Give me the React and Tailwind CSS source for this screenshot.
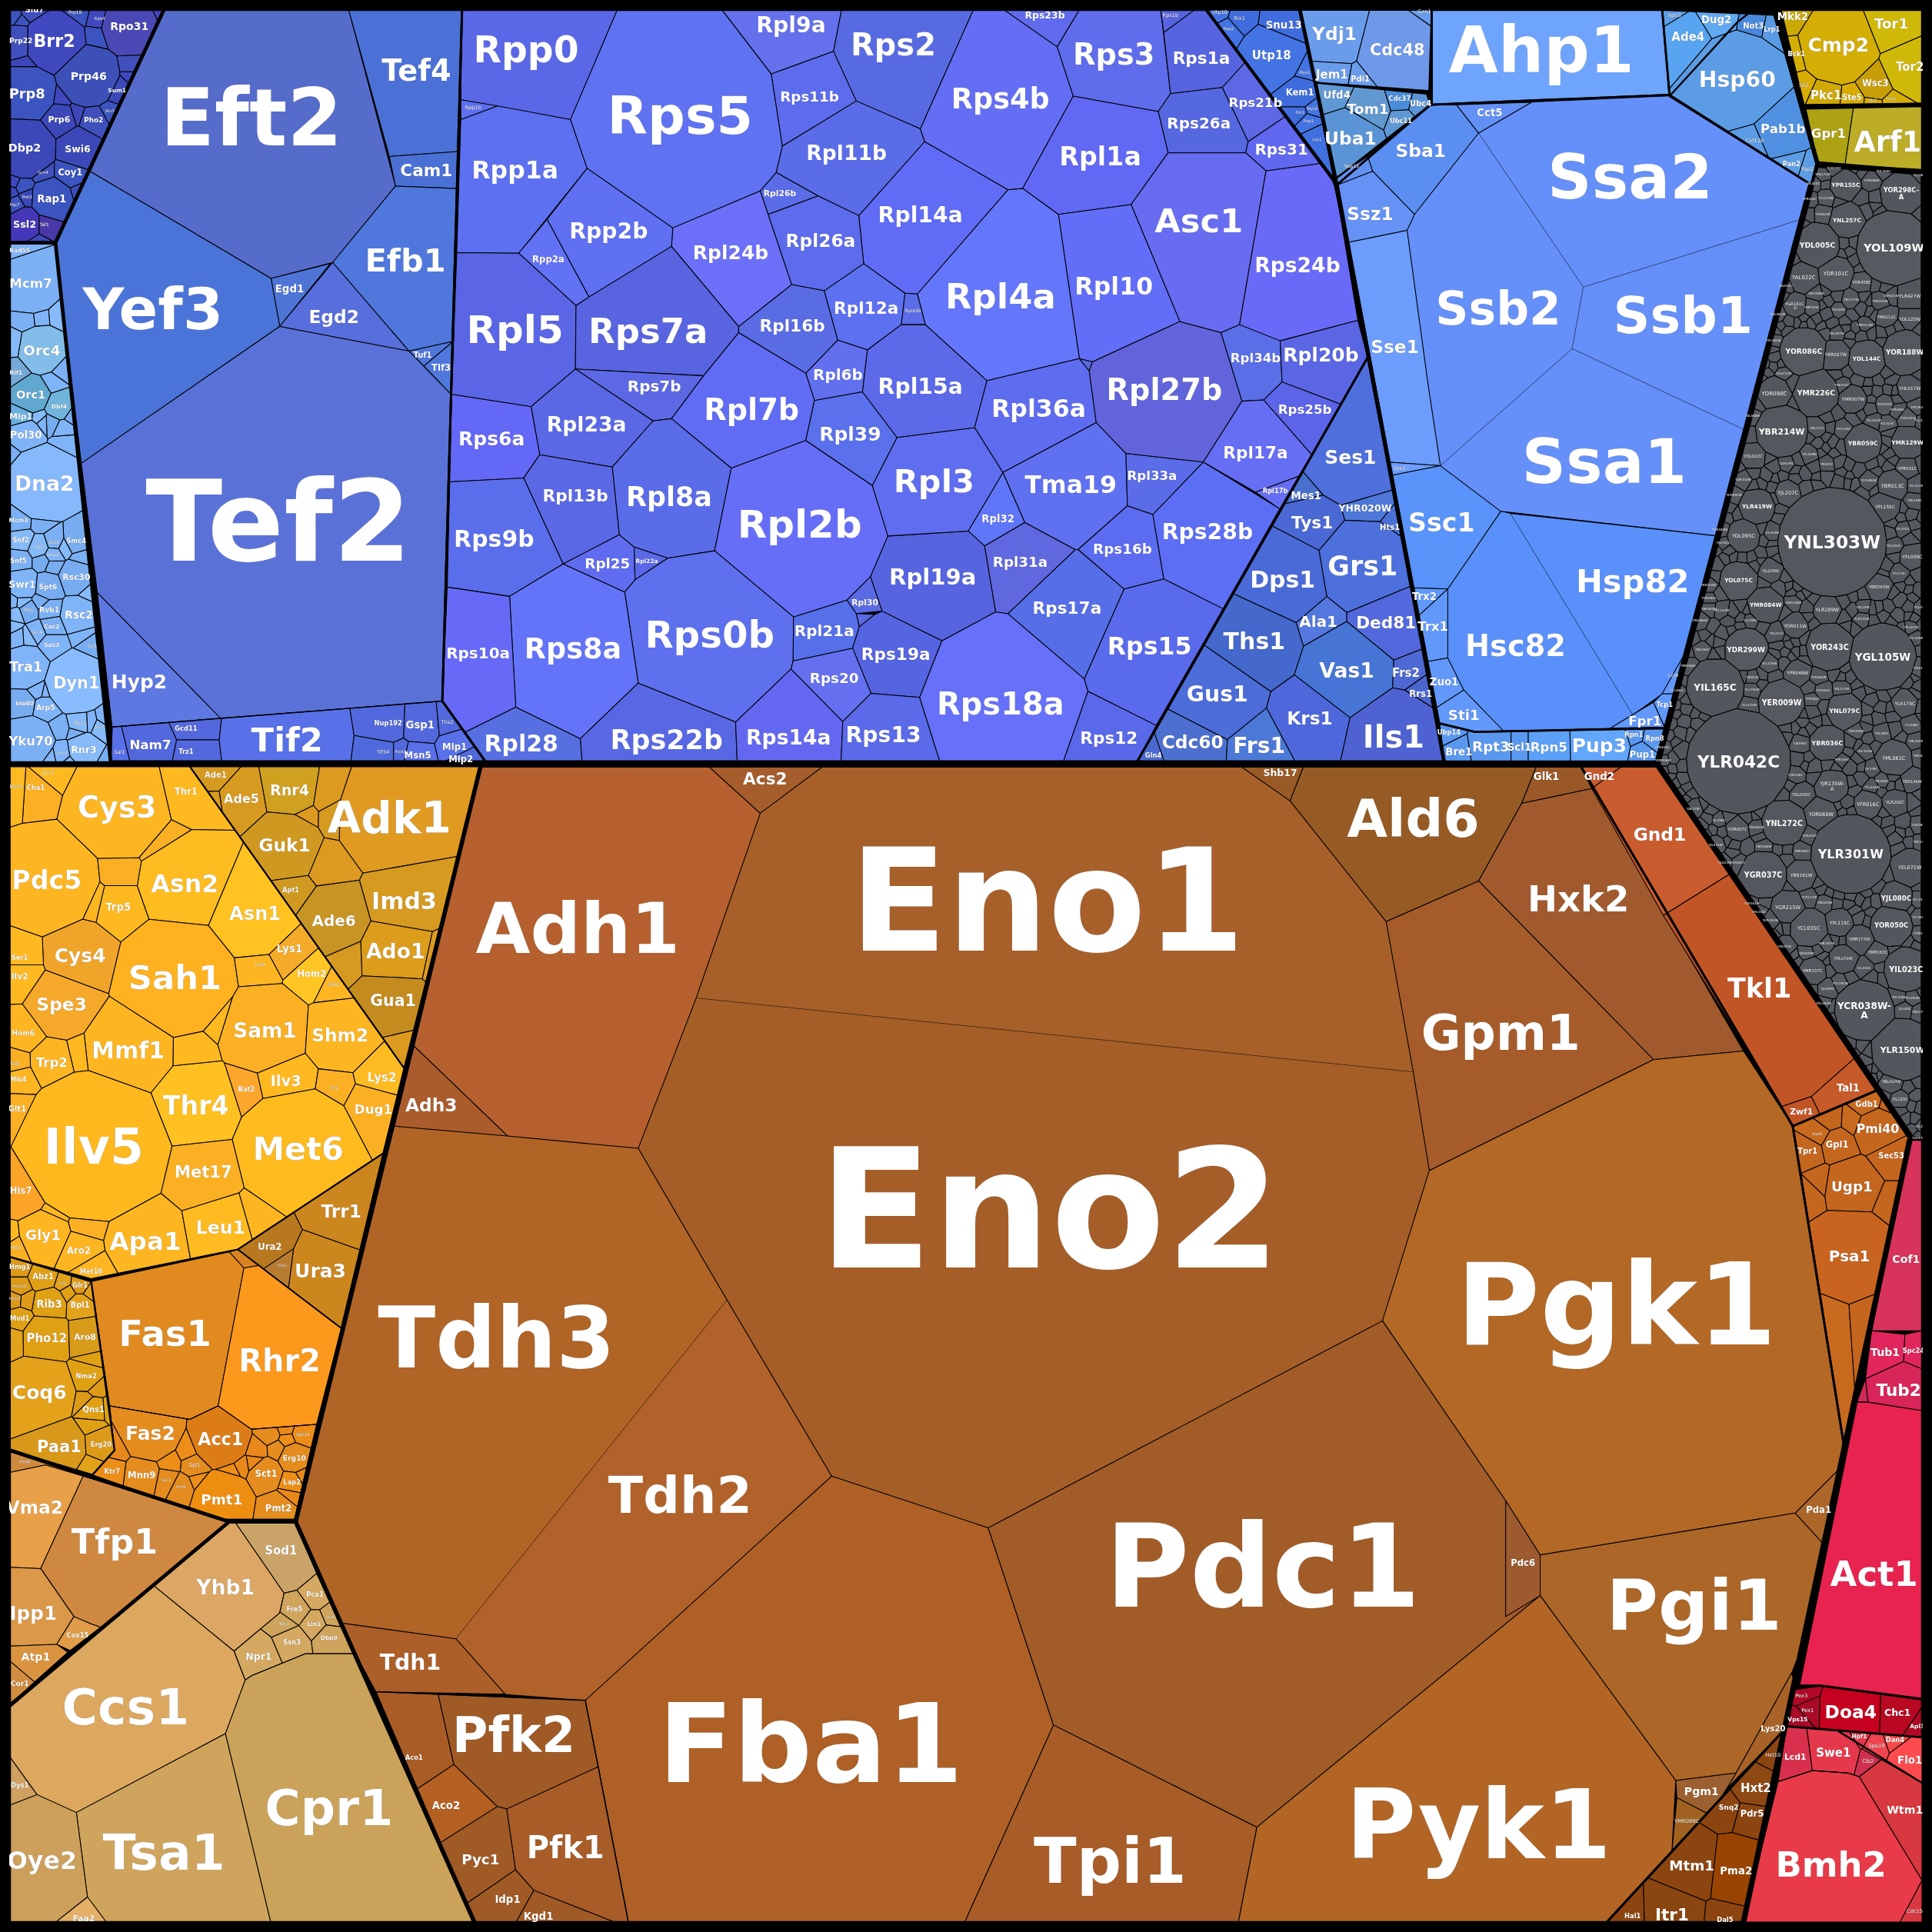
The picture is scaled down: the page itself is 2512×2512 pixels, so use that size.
import React from 'react';

// voronoi treemap: coordinates are in a 1568 box, scaled up by the svg viewBox
const rng = (seed) => () => {
  seed = (seed + 0x6d2b79f5) | 0;
  let t = Math.imul(seed ^ (seed >>> 15), 1 | seed);
  t = (t + Math.imul(t ^ (t >>> 7), 61 | t)) ^ t;
  return ((t ^ (t >>> 14)) >>> 0) / 4294967296;
};

const clip = (poly, a, b, c) => {
  const out = [];
  for (let i = 0; i < poly.length; i++) {
    const p = poly[i];
    const q = poly[(i + 1) % poly.length];
    const dp = a * p[0] + b * p[1] - c;
    const dq = a * q[0] + b * q[1] - c;
    if (dp <= 0) out.push(p);
    if (dp < 0 !== dq < 0) {
      const t = dp / (dp - dq);
      out.push([p[0] + (q[0] - p[0]) * t, p[1] + (q[1] - p[1]) * t]);
    }
  }
  return out;
};

const inside = (poly, x, y) => {
  let hit = false;
  for (let i = 0, j = poly.length - 1; i < poly.length; j = i++) {
    const [xi, yi] = poly[i];
    const [xj, yj] = poly[j];
    if (yi > y !== yj > y && x < ((xj - xi) * (y - yi)) / (yj - yi) + xi) hit = !hit;
  }
  return hit;
};

const powerCells = (poly, sites) =>
  sites.map((s) => {
    let cell = poly;
    for (const o of sites) {
      if (o === s || cell.length === 0) continue;
      const a = 2 * (o[1] - s[1]);
      const b = 2 * (o[2] - s[2]);
      const c = o[1] * o[1] + o[2] * o[2] - s[1] * s[1] - s[2] * s[2] - o[3] * o[3] + s[3] * s[3];
      if (a === 0 && b === 0) continue;
      cell = clip(cell, a, b, c);
    }
    return cell;
  });

const addFiller = (poly, sites, count, seed, rMin, rMax, prefix) => {
  const rand = rng(seed);
  const xs = poly.map((p) => p[0]);
  const ys = poly.map((p) => p[1]);
  const x0 = Math.min(...xs);
  const x1 = Math.max(...xs);
  const y0 = Math.min(...ys);
  const y1 = Math.max(...ys);
  const out = [...sites];
  let tries = 0;
  let added = 0;
  while (added < count && tries < count * 60) {
    tries++;
    const x = x0 + rand() * (x1 - x0);
    const y = y0 + rand() * (y1 - y0);
    const r = rMin + rand() * (rMax - rMin);
    if (!inside(poly, x, y)) continue;
    if (out.some((s) => Math.hypot(s[1] - x, s[2] - y) < s[3] * 0.98 + r * 0.7)) continue;
    const num = String(Math.floor(rand() * 480) + 10).padStart(3, '0');
    const chrom = 'ABCDEFGHIJKLMNOP'[Math.floor(rand() * 16)];
    const label = prefix === 'Y' ? `Y${chrom}${rand() > 0.5 ? 'L' : 'R'}${num}${rand() > 0.5 ? 'W' : 'C'}` : '';
    out.push([label, x, y, r, r > 5 ? 2.5 : 0, null]);
    added++;
  }
  return out;
};

const GROUPS = [
  {
    poly: [[1475,135],[1560,140],[1560,925],[1550,922],[1345,620],[1470,150]],
    w: 4, colors: ['#54585e','#565a60','#53575d'], filler: [620, 11, 2.5, 7.5, 'Y'],
    sites: [
      ['YPR155C',1498,150,12,4.4],['YOR298C-|A',1543,157,17,5],['YNL257C',1499,179,14,4.4],['YOL109W',1537,201,30,8.8],['YDL005C',1475,199,18,5.6],
      ['YDR101C',1490,222,14,4.2],['YAL022C',1464,225,12,4.2],['YOR458C',1511,229,8,3.2],['YLR427W',1550,240,10,3.6],['YMR212C',1531,257,8,3.1],
      ['YOL125W',1550,259,8,3.5],['YGR161C-|D',1457,248,9,3.1],['YOR086C',1464,285,19,5.6],['YKR027W',1490,288,12,3.5],['YDL144C',1515,291,15,4.4],
      ['YOR188W',1546,286,18,5.4],['YMR226C',1474,319,18,5.6],['YDR098C',1440,319,13,4.2],['YMR007W',1504,324,11,3.5],['YHL017W',1550,315,10,3.5],
      ['YBR214W',1446,350,21,6.6],['YBR059C',1512,360,15,4.6],['YMR129W',1548,359,13,4.4],['YOL022C',1423,370,10,3.3],['YBR013C',1536,394,12,3.9],
      ['YPR091C',1548,380,8,3.3],['YJL207C',1451,400,10,4],['YLR419W',1426,411,14,4.4],['YNL303W',1487,440,44,14],['YOL095C',1415,435,13,4],
      ['YPL155C',1530,411,12,3.5],['YJL209W',1437,463,9,3],['YOL075C',1411,471,15,4.4],['YMR084W',1433,491,14,4.4],['YLR289W',1483,495,11,3.9],
      ['YBR293W',1525,476,10,3.3],['YPL009C',1552,452,10,3.6],['YOR011W',1457,508,10,3.6],['YOR243C',1485,525,19,5.8],['YGL105W',1528,533,27,8.1],
      ['YDR299W',1417,527,17,5.4],['YIL165C',1392,558,23,7.3],['YER009W',1446,570,18,5.8],['YPR048W',1459,546,10,3.5],['YNL079C',1497,577,14,4.8],
      ['YLR179C',1546,571,10,3.6],['YBR036C',1483,603,14,4.8],['YLR042C',1411,618,42,13],['YML061C',1537,615,14,3.9],['YJR135W-|A',1487,638,13,4],
      ['YKL050C',1462,645,9,3.3],['YER136W',1552,634,8,3.1],['YFR016C',1516,653,11,3.9],['YLR282C',1538,651,10,3.3],['YNL272C',1448,668,18,5.8],
      ['YOR069W',1478,661,13,3.9],['YLR301W',1502,693,32,9.6],['YOR007C',1410,673,9,3.3],['YEL071W',1550,704,15,3.9],['YGR037C',1431,710,19,5.8],
      ['YBR161W',1462,710,12,3.5],['YJL080C',1539,729,13,5.2],['YGR215W',1451,736,13,4],['YCL035C',1468,753,15,4],['YPL115C',1493,749,11,3.6],
      ['YOR050C',1535,751,17,5.2],['YMR173W',1509,762,11,3.3],['YMR163C',1524,773,8,3.3],['YIL023C',1547,787,18,5.8],['YPL070W',1496,778,11,3.1],
      ['YMR157C',1471,788,11,3.3],['YCR038W-|A',1513,820,24,7.3],['YLR150W',1544,852,25,6.5],['YBL024W',1535,878,9,3.1],['YIL123C',1542,892,7,3],
    ],
  },
  {
    poly: [[375,8],[979,8],[1083,146],[1110,290],[923,618],[394,618],[359,569]],
    w: 3, colors: ['#5f6ff0'],
    cells: [
      ['Rpp0',427,40,28.4,'#5a68e8',[375,8,501,8,463,97,374,81]],
      ['Rpp1b',384,87,4,'#5c70f0',[374,81,404,86,374,97]],
      ['Rpp1a',418,138,19,'#5c70f0',[374,97,404,86,463,97,476.5,136.6,421,205.5,370.7,205]],
      ['Rps5',552,93,41,'#5f72f2',[501,8,586,8,626,60,635,118.6,630,140,617,155,546,185,476.5,136.6,463,97]],
      ['Rpl9a',642,20,17,'#6470ec',[586,8,683,8,676.5,41.6,626,60]],
      ['Rps11b',657,78,11,'#5c6cec',[626,60,676.5,41.6,695,82,635,118.6]],
      ['Rps2',725,36,24,'#586ae2',[683,8,790,8,747,104.6,695,82,676.5,41.6]],
      ['Rpl11b',687,124,16,'#5a6ce8',[695,82,747,104.6,750.5,115,697,175,664,159,630,140,635,118.6]],
      ['Rps4b',812,80,22,'#646ef4',[790,8,815,8,858,38,871,78,830,153,818,154,750.5,115,747,104.6]],
      ['Rps23b',848,12,7.5,'#5f6aec',[815,8,876,8,858,38]],
      ['Rps3',904,44,23,'#5f6cec',[876,8,942,8,950,76,940,90.5,871,78,858,38]],
      ['Rps1b',950,12,4,'#5664e0',[942,8,969.5,8,944.5,26.4]],
      ['Rps1a',975,47,13,'#5664e0',[944.5,26.4,969.5,8,978,8,1012,49,992,71,950,76]],
      ['Rps21b',1019,83,10,'#5c68e4',[1012,49,1047,92,1013,115,992,71]],
      ['Rps26a',973,100,12,'#5668e0',[992,71,1013,115,1011,124,948,124,940,90.5,950,76]],
      ['Rps31',1040,121,12,'#6068f0',[1013,115,1047,92,1073,132.5,1027.5,138.7,1011,124]],
      ['Rpl1a',893,127,20,'#6068f4',[871,78,940,90.5,948,124,918,166,859,174,830,153]],
      ['Asc1',973,179,26,'#686cf0',[948,124,1011,124,1027.5,138.7,1006,263.5,991,270,957.6,261,918,166]],
      ['Rps24b',1053,215,16,'#6a6af8',[1027.5,138.7,1073,132.5,1083,146,1102,260,1039,276.6,1006,263.5]],
      ['Rpl10',904,232,19,'#626ef8',[859,174,918,166,957.6,261,886.6,293.7,876,291]],
      ['Rpl4a',812,240,27,'#6476fa',[818,154,830,153,859,174,876,291,801,309,751,263.5,744.5,238.6]],
      ['Rpl14a',747,174,17,'#606cf6',[750.5,115,818,154,744.5,238.6,734.5,238,701,214,697,175]],
      ['Rpl26b',633,157,6.5,'#5a6ce8',[617,155,630,140,664,159,623.4,174]],
      ['Rpl26a',666,195,14,'#5c6cec',[623.4,174,664,159,697,175,701,214,669,236,642.5,231]],
      ['Rpl24b',593,205,15,'#6c70f8',[546,185,617,155,623.4,174,642.5,231,599.5,265,545,200]],
      ['Rpp2b',494,187,17,'#5f70f2',[476.5,136.6,546,185,545,200,478,241,444,178]],
      ['Rpp2a',445,210,7,'#6272f4',[421,205.5,444,178,478,241,467.5,248]],
      ['Rpl5',418,267,30,'#5a66e6',[370.7,205,421,205.5,467.5,248,467,299.5,431,330,366.6,320]],
      ['Rps7a',526,268,27,'#5864e0',[467.5,248,478,241,545,200,599.5,265,599.5,270,571,305,467,299.5]],
      ['Rps7b',531,313,12,'#5c68e4',[467,299.5,571,305,545,339.8,530,341.6]],
      ['Rpl16b',643,264,13,'#5a6ce4',[599.5,265,642.5,231,669,236,680,276,654,303,599.5,270]],
      ['Rpl12a',703,250,13,'#5c70f0',[669,236,701,214,734.5,238,731.5,263.5,704,284,680,276]],
      ['Rpl43b',741,252,3.5,'#5a6ce8',[734.5,238,744.5,238.6,751,263.5,731.5,263.5]],
      ['Rpl6b',680,304,12,'#6270f0',[680,276,704,284,700,318,661,325,654,303]],
      ['Rpl7b',610,332,23,'#606cf4',[599.5,270,654,303,661,325,654,357.5,593.5,380,545,339.8,571,305]],
      ['Rpl23a',476,344,16,'#5a68e6',[431,330,467,299.5,530,341.6,497,379,438,369]],
      ['Rps6a',399,356,15,'#6468f6',[366.6,320,431,330,438,369,425,388,365,391]],
      ['Rpl13b',467,402,13,'#5a68e6',[438,369,497,379,502.7,434,457,457.7,425,388]],
      ['Rpl8a',543,403,21,'#5a6ce8',[497,379,530,341.6,545,339.8,593.5,380,580,447,542,453,514.7,444,502.7,434]],
      ['Rps9b',401,437,18,'#5a6eec',[365,391,425,388,457,457.7,413.6,484,363,476.5]],
      ['Rpl25',493,457,11,'#5f6cf0',[457,457.7,502.7,434,514.7,444,515.4,470.6,507,480.6]],
      ['Rpl22a',525,455,4.5,'#5a68e8',[514.7,444,542,453,515.4,470.6]],
      ['Rpl2b',649,425,30,'#666ef8',[593.5,380,654,357.5,708,394,720.6,435,706.5,468,687.4,487,644,500.7,580,447]],
      ['Rps0b',576,515,29,'#5e70ee',[507,480.6,515.4,470.6,542,453,580,447,644,500.7,643.7,536.3,642,543,597,586,518,554.4]],
      ['Rps8a',465,526,22,'#6474f8',[413.6,484,457,457.7,507,480.6,518,554.4,471,599.5,418.6,574]],
      ['Rps10a',388,530,12,'#666af6',[363,476.5,413.6,484,418.6,574,376,595,359,570]],
      ['Rpl28',423,603,18,'#5670e2',[376,595,418.6,574,471,599.5,472.4,618,394,618]],
      ['Rps22b',541,600,21,'#5868e4',[471,599.5,518,554.4,597,586,598.3,618,472.4,618]],
      ['Rps14a',640,598,16,'#6468f0',[597,586,642,543,684,585.6,682.6,618,598.3,618]],
      ['Rps20',677,550,11,'#6470f0',[642,543,643.7,536.3,692,526,707,562.7,684,585.6]],
      ['Rpl21a',669,512,12,'#5670ea',[644,500.7,687.4,487,695,498,697.4,508.7,692,526,643.7,536.3]],
      ['Rpl30',702,489,6.5,'#5a6ae4',[687.4,487,706.5,468,716,496,695,498]],
      ['',0,0,0,'#5a6ae4',[695,498,710,498.7,697.4,508.7]],
      ['Rps19a',727,531,13,'#5564e0',[697.4,508.7,710,498.7,716,496,764.5,520,746.4,566,707,562.7,692,526]],
      ['Rps13',717,596,17,'#5a6ae8',[707,562.7,746.4,566,762.8,618,682.6,618,684,585.6]],
      ['Rps18a',812,571,24,'#6670f8',[746.4,566,764.5,520,808,496.6,818,498,880,551,883,561,863,618,762.8,618]],
      ['Rps12',900,599,13,'#5a68ea',[883,561,938.4,588.7,923,618,863,618]],
      ['Rps15',933,524,19,'#5a6aec',[880,551,912.3,478,944.5,469.8,992.6,494,938.4,588.7,883,561]],
      ['Rps17a',866,493,13,'#566ee8',[818,498,872.7,446,875,446,912.3,478,880,551]],
      ['Rpl31a',828,456,11,'#6068e0',[799,443,831.7,424,872.7,446,818,498,808,496.6]],
      ['Rpl32',810,421,8,'#6076f8',[785.8,431,814,383.4,831.7,424,799,443]],
      ['Rpl19a',757,468,17.5,'#5664e0',[720.6,435,785.8,431,799,443,808,496.6,764.5,520,716,496,706.5,468]],
      ['Rpl3',758,390,25,'#5f6ef0',[728,355,791,347,814,383.4,785.8,431,720.6,435,708,394]],
      ['Rpl39',690,352,15,'#5a70ec',[661,325,700,318,728,355,708,394,654,357.5]],
      ['Rpl15a',747,313,17,'#5c6aea',[700,318,704,284,731.5,263.5,751,263.5,801,309,791,347,728,355]],
      ['Rpl36a',843,331,19,'#5e6cf0',[801,309,876,291,884,301,889.7,343,814,383.4,791,347]],
      ['',0,0,0,'#5a68e0',[876,291,886.6,293.7,884,301]],
      ['Tma19',869,393,19,'#5f70f0',[814,383.4,889.7,343,913.8,368,915,410.5,875,446,872.7,446,831.7,424]],
      ['Rpl33a',935,386,10,'#5a6ce8',[913.8,368,976.6,375,935.7,417.6,915,410.5]],
      ['Rps16b',911,445,11,'#5c6cf0',[875,446,915,410.5,935.7,417.6,944.5,469.8,912.3,478]],
      ['Rps28b',980,431,17,'#5c6ef4',[935.7,417.6,976.6,375,1038.6,413,992.6,494,944.5,469.8]],
      ['Rpl27b',945,316,23,'#6264dc',[886.6,293.7,957.6,261,991,270,1008,325.6,976.6,375,913.8,368,889.7,343,884,301]],
      ['Rpl34b',1019,290,10,'#5a6ee8',[991,270,1006,263.5,1039,276.6,1040.5,310,1025.5,324.6,1008,325.6]],
      ['Rpl20b',1072,288,15,'#5a66e4',[1039,276.6,1102,260,1110,290,1088,328,1040.5,310]],
      ['Rps25b',1059,332,10,'#5c64e8',[1025.5,324.6,1040.5,310,1088,328,1064.5,369]],
      ['Rpl17a',1019,367,13,'#666ef4',[1008,325.6,1025.5,324.6,1064.5,369,1054,386.6,1019,399.5,976.6,375]],
      ['Rpl17b',1035,398,5,'#666ef4',[1019,399.5,1054,386.6,1038.6,413]],
    ],
  },
  {
    poly: [[1110,290],[1172,618],[923,618]],
    w: 3, colors: ['#4c6cd8'],
    sites: [
      ['Ses1',1096,371,38,15,'#4f6fdc'],['Mes1',1060,402,14,8,'#4870cc'],['YHR020W',1108,412,16,7.5,'#4d78d8'],['Hts1',1128,428,8,6,'#4a70d8'],['Tys1',1065,424,24,13,'#4a68d4'],
      ['Grs1',1106,459,38,21,'#4d70dd'],['Dps1',1041,470,38,18,'#4a6ad8'],['Ala1',1070,504,20,12,'#5578de'],['Ded81',1125,505,30,13,'#5268dc'],['Ths1',1018,520,38,18,'#4468cc'],
      ['Vas1',1093,544,38,16,'#4775d5'],['Frs2',1141,546,11,9,'#4e68d4'],['Rrs1',1153,563,10,7,'#4a66cc'],['Gus1',988,563,38,17,'#4c6cd8'],['Krs1',1063,583,32,14,'#4e68dc'],
      ['Cdc60',968,602,28,14,'#4d70d0'],['Frs1',1022,605,26,17,'#4c78d8'],['Ils1',1131,598,38,24,'#4f62d2'],['Gln4',936,613,10,5,'#4a68d0'],
    ],
  },
  {
    poly: [[979,8],[1055,8],[1083,146]],
    w: 2.5, colors: ['#4070e0','#3f6cdc','#4474e4'],
    sites: [
      ['Snu13',1042,20,16,8],['Utp18',1032,45,24,9],['Kem1',1055,75,12,7],['Rix1',1006,15,8,4],['Utp10',990,10,6,4],['Pwp2',997,23,7,3],
      ['Myo1',1059,59,5,3],['Pdr1',1055,91,5,3],['Myo2',1065,88,5,3],['Pwp1',1062,98,5,3],['Lsp1',1069,113,8,3],
    ],
  },
  {
    poly: [[1055,8],[1162,8],[1160,74],[1067,67]],
    w: 2.5, colors: ['#6a9cec','#6e98e8'],
    sites: [['Ydj1',1083,27,26,14],['Cdc48',1134,40,32,12.5],['Jem1',1081,60,14,9],['Pdi1',1104,64,8,6],['Gcn1',1156,9,10,4]],
  },
  {
    poly: [[1067,67],[1158,76],[1161,85],[1083,146]],
    w: 2.5, colors: ['#5f98d4','#5b94d6','#6298d0'],
    sites: [['Ufd4',1085,77,10,8],['Tom1',1110,88,17,11],['Cdc37',1136,80,9,5,'#4a8cd8'],['Ubc4',1153,84,8,6],['Ubc11',1137,98,8,5],['Uba1',1096,112,24,14]],
  },
  {
    poly: [[1085,150],[1161,85],[1355,77],[1470,150],[1351,591],[1197,594],[1168,587]],
    w: 3, colors: ['#6590fa'],
    cells: [
      ['Ssa2',1323,143,48,'#6590fa',[1200,108,1243,83,1355,78,1470,150,1462,178,1285,233],1],
      ['Ssb2',1216,250,36,'#6590fa',[1200,108,1148,174,1142,187,1159,312,1169,378,1276,283,1285,233],1],
      ['Ssb1',1366,255,40,'#6590fa',[1285,233,1462,178,1416,349,1276,283],1],
      ['Ssa1',1302,374,48,'#6590fa',[1169,378,1276,283,1416,349,1394,435,1218,415],1],
      ['Hsp82',1325,471,25,'#5a90fa',[1226,417,1394,435,1367,531,1349,563,1325,580],1],
      ['Hsc82',1230,524,23,'#5a90fa',[1218,415,1175,478,1175,534,1188,560,1220,593,1307,591,1325,580,1226,417],1],
      ['Sba1',1153,122,14,'#5a8ef0',[1162,85,1182,85,1200,108,1148,174,1114,139,1110,127]],
      ['Nop13',1097,135,3.5,'#6490f0',[1110,127,1114,139,1083,151,1081,146]],
      ['Cct5',1209,91,8,'#6290f4',[1182,85,1243,83,1200,108]],
      ['Ssz1',1112,173,14,'#6692f6',[1083,151,1114,139,1148,174,1142,187,1093,197]],
      ['Sse1',1132,281,14,'#6c9cfc',[1093,197,1142,187,1159,312,1169,378,1126,375]],
      ['Sse2',1136,380,4,'#6c9cfc',[1126,375,1169,378,1128,386]],
      ['Ssc1',1170,424,20,'#5a94fa',[1128,386,1169,378,1218,415,1175,478,1145,477]],
      ['Trx2',1156,484,8,'#5f98fa',[1145,477,1175,478,1151,500]],
      ['Trx1',1163,508,10,'#6298fa',[1151,500,1175,478,1175,534,1158,537]],
      ['Zuo1',1172,553,8,'#6298fa',[1158,537,1175,534,1188,560,1165,575]],
      ['Sti1',1188,580,11,'#6298fa',[1165,575,1188,560,1220,593,1197,594,1168,587]],
      ['Fpr1',1335,585,10,'#6298fa',[1307,591,1325,580,1342,570,1351,590]],
      ['Tcp1',1351,572,5,'#6298fa',[1342,570,1349,563,1359,563,1351,590]],
      ['Cct4',1358,548,3.5,'#6298fa',[1349,563,1367,531,1370,520,1359,563]],
    ],
  },
  {
    poly: [[1168,587],[1197,594],[1351,591],[1345,618],[1172,618]],
    w: 2.5, colors: ['#5a98f0'],
    sites: [
      ['Ubp14',1176,594,8,5],['Bre1',1184,610,10,8],['Rpt3',1210,606,18,11],['Scl1',1233,606,10,8],['Rpn5',1257,606,18,10,'#5ca0f8'],
      ['Pup3',1298,605,24,15,'#62a6fc'],['Rpn1',1326,596,6,5],['Rpn8',1343,599,8,5],['Pup1',1333,612,8,7],
    ],
  },
  { poly: [[1162,8],[1349,8],[1355,77],[1162,85]], w: 3, colors: ['#6ea4fc'], cells: [['Ahp1',1251,40,50,'#6ea4fc',[1162,8,1349,8,1355,77,1162,85]]] },
  {
    poly: [[1349,8],[1440,12],[1474,133],[1470,150],[1355,78]],
    w: 2.5, colors: ['#5a9ae4','#5c9ce4'],
    sites: [
      ['Hsp60',1410,64,38,17],['Pab1b',1447,104,22,10,'#5090e0'],['Ade4',1370,30,18,9,'#58a4f0'],['Dug2',1393,16,14,8,'#62a8f0'],['Not3',1423,21,8,6,'#4a88dc'],
      ['Lrp1',1438,24,6,5],['Caf130',1424,114,10,4],['Pan2',1454,133,8,5],['Pap2',1467,137,5,4],['Apn3',1359,12,6,4],
    ],
  },
  {
    poly: [[1445,8],[1560,8],[1560,84],[1464,86]],
    w: 3, colors: ['#d4ad05','#d8ac04','#d0a806'],
    sites: [
      ['Mkk2',1455,13,12,8,'#c9a808'],['Cmp2',1492,36,32,15],['Tor1',1535,19,22,11,'#d0b808'],['Tor2',1550,54,22,9,'#d0b808'],['Wsc3',1522,67,14,7,'#c89e08'],
      ['Pkc1',1482,77,12,9],['Ste5',1503,79,9,6],['Bck1',1458,44,11,5],['Slt2',1464,69,7,4],['Ptc1',1520,81,5,3],['Hog1',1535,80,5,3],
    ],
  },
  { poly: [[1465,88],[1560,86],[1560,138],[1475,133]], w: 3, colors: ['#bcac28'], sites: [['Gpr1',1484,108,18,10,'#aca214'],['Arf1',1532,115,32,22,'#bcac28']] },
  {
    poly: [[8,8],[133,8],[45,197],[8,197]],
    w: 3, colors: ['#3f50bc','#3c54c0','#4048c0','#3c48b8'], filler: [14, 21, 2.5, 4.5, ''],
    sites: [
      ['Slu7',28,8,10,6],['Brr2',44,33,24,13.3],['Prp22',17,33,12,5.5],['Rpo31',105,21,22,8.4,'#4a48b4'],['Prp46',72,62,24,8.5,'#3c50b8'],
      ['Prp8',22,76,22,10.7],['Prp6',48,97,12,6.6],['Pho2',76,97,9,5.3],['Dbp2',20,120,24,8.6],['Swi6',63,121,16,7.5],
      ['Coy1',57,140,11,6.9],['Rap1',42,161,16,8],['Ssl2',20,182,13,7.7,'#4438b8'],['Taf1',36,182,7,3.5,'#4838a8'],['Sum1',95,73,9,4.5],
      ['Prp19',61,10,7,3.6],['Rpb4',81,15,5,3.2],['Skn7',89,90,5,3],['Fap7',12,166,6,3.2],['Pob3',22,160,5,3.2],['Gcn4',35,140,6,3.2],
    ],
  },
  {
    poly: [[8,197],[45,197],[90,620],[8,620]],
    w: 3, colors: ['#80b4f8','#7cb0f4','#86baf8','#78acf0'], filler: [36, 31, 2, 4, ''],
    sites: [
      ['Rad55',16,203,6,4.5],['Mcm7',25,230,24,10],['Orc4',34,284,18,11,'#82bce8'],['Rif1',13,302,8,4.5,'#74a8d8'],['Orc1',25,320,14,8.7,'#60a8d0'],
      ['Dbf4',48,330,9,4.5,'#70b4dc'],['Mip1',17,338,8,6.5,'#68b0e0'],['Pol30',21,353,12,8],['Dna2',36,392,30,16,'#86b8fc'],['Mcm3',15,422,8,4.5],
      ['Snf2',17,438,7,5],['Sth1',32,444,6,3.5],['Snf5',15,455,7,5],['Smc4',62,439,8,5],['Dst1',44,440,5,3.5],
      ['Smc2',43,450,5,3.5],['Rsc30',62,468,12,6.5],['Swr1',18,474,11,7.5],['Spt6',39,476,9,5.5],['Rvb1',40,495,6,5.5],
      ['Rsc2',64,499,13,8.4],['Htz1',23,495,5,3.5],['Cac2',42,508,6,4.5],['Sas3',42,523,7,4.5],['Scc4',30,513,5,3.5],
      ['Esf1',75,524,6,3.5],['Tra1',21,541,16,10.6],['Dyn1',62,554,24,12.5,'#88bcff'],['Ino80',20,571,7,4.5],['Arp5',37,574,8,5.5],
      ['Yku70',25,601,18,9.8],['Rnr3',68,608,12,7.5],['Rev3',81,590,4,3],['Mec1',65,587,6,3.5],['Dnl4',50,611,6,3.2],
    ],
  },
  {
    poly: [[133,8],[375,8],[359,569],[394,618],[90,618],[45,197]],
    w: 3, colors: ['#5a72d8'],
    cells: [
      ['Eft2',204,95,62,'#566ccb',[133,8,283,8,321,151,270,213,220,226,73,139]],
      ['Tef4',338,57,23,'#4b71d6',[283,8,375,8,372,123,316,127]],
      ['Cam1',346,138,13,'#4b70d5',[316,127,372,123,371,153,321,151]],
      ['Efb1',329,211,25,'#4f77dc',[321,151,371,153,368,277,332,285,270,213]],
      ['Tuf1',343,288,6,'#4f77dc',[332,285,368,277,344,297]],
      ['Tif3',358,298,7,'#4f77dc',[344,297,368,277,366,320]],
      ['Egd1',235,234,8,'#4e74d6',[220,226,268,214,227,265]],
      ['Egd2',271,257,14,'#586edd',[270,213,332,285,227,265]],
      ['Yef3',124,250,45,'#4b74d8',[73,139,220,226,227,265,66,376,45,197]],
      ['Tef2',226,422,88,'#5a72d8',[66,376,227,265,332,285,366,320,359,569,179,583,79,481]],
      ['Hyp2',113,553,15,'#5e78e2',[79,481,179,583,91,590]],
    ],
  },
  {
    poly: [[91,590],[179,583],[359,569],[394,618],[90,618]],
    w: 1.5, colors: ['#5870e8','#5268dc','#4f6adc'],
    sites: [
      ['Sal1',97,610,8,4],['Nam7',122,604,20,10,'#5268dc'],['Gcd11',151,591,9,5],['Trz1',151,610,9,5],['Tif2',233,600,48,26,'#5870e8'],
      ['Nup192',315,587,14,5],['Gsp1',341,588,14,8],['Tif34',311,610,8,4],['Msn5',339,613,10,7],['Mlp1',369,606,10,7],
      ['Mlp2',374,616,8,7],['Ths2',363,586,6,4],['Prp43',325,610,5,3],
    ],
  },
  {
    poly: [[8,622],[154,622],[328,867],[311,936],[193,1014],[74,1038],[8,1020]],
    w: 2, colors: ['#fdb622','#fbb024','#ffb920'], filler: [10, 41, 2, 4, ''],
    sites: [
      ['Dur1',39,627,7,4],['Cha1',29,639,9,5],['Met3',13,638,7,4],['Cys3',95,655,40,23],['Thr1',151,642,15,7],
      ['Pdc5',38,714,40,20],['Trp5',96,736,14,8],['Asn2',150,717,34,19,'#ffbc20'],['Asn1',207,741,34,14.5,'#ffc220'],['Cys4',65,775,24,15,'#f0a52a'],
      ['Ser1',16,777,6,5],['Ilv2',16,792,9,6.5],['Sah1',142,793,46,26,'#ffb120'],['Lys1',235,770,14,8,'#f5ab2a'],['Lys9',211,783,4,3.5],
      ['Hom2',253,790,10,7,'#ffc525'],['Gdh2',271,799,5,3.5],['Spe3',50,815,24,14,'#f5a82a'],['Sam1',215,836,33,15.8],['Shm2',276,840,26,14],
      ['Mmf1',104,852,34,18],['Hom6',19,838,10,5.5],['Trp2',42,862,13,10],['His4',15,876,7,5],['Ilv8',12,863,5,4],
      ['Lys2',310,874,14,9,'#ffbb22'],['Thr4',159,897,32,20,'#ffc021'],['Bat2',200,884,9,5,'#fca62c'],['Ilv3',232,877,20,11.7],['Sct2',271,883,4,3],
      ['Dug1',303,900,18,10],['Glt1',14,900,8,6],['Ilv5',76,930,60,38,'#ffb91e'],['Met6',242,932,48,25,'#ffbb1e'],['Met17',165,951,25,12.7],
      ['His7',17,966,20,7,'#fca428'],['Apa1',118,1007,28,19.6],['Leu1',179,996,22,14.2,'#ffbb20'],['Gly1',35,1002,18,11],['Aro2',64,1015,10,7],
      ['His2',13,1012,6,4],['Met10',74,1032,8,5],
    ],
  },
  {
    poly: [[154,622],[390,622],[328,867]],
    w: 2, colors: ['#dc9a20','#d69a20','#cf9820'], filler: [8, 51, 2, 4, ''],
    sites: [
      ['Ade1',175,629,10,6],['Ade5',196,648,17,9.6],['Rnr4',235,641,20,11.5,'#d0a020'],['Adk1',316,663,40,34,'#e09a22'],['Guk1',231,686,26,14],
      ['Imd3',328,731,26,18],['Ade6',271,747,24,12,'#c89424'],['Ado1',321,772,26,16,'#dc9c1c'],['Gua1',319,812,24,12.3,'#c48c1e'],['Apt1',236,722,6,5],
    ],
  },
  {
    poly: [[311,936],[277,1078],[193,1014]],
    w: 2, colors: ['#cc861e'],
    sites: [['Trr1',277,983,22,14],['Ura2',219,1012,13,7,'#b87820'],['Ura3',260,1031,24,15],['Ura1',229,1027,8,3,'#b87c30']],
  },
  {
    poly: [[74,1040],[186,1016],[193,1014],[277,1078],[257,1156],[204,1160],[177,1141],[154,1152],[89,1141]],
    w: 0.5, colors: ['#e08a20'],
    cells: [
      ['Fas1',134,1082,28,'#e08a20',[74,1040,186,1016,198,1029,177,1141,154,1152,89,1141]],
      ['Rhr2',227,1104,24,'#fc981c',[198,1029,210,1027,277,1078,257,1156,204,1160,177,1141]],
      ['',0,0,0,'#d88420',[186,1016,193,1014,210,1027,198,1029]],
    ],
  },
  {
    poly: [[89,1141],[154,1152],[177,1141],[204,1160],[257,1156],[239,1233],[176,1233],[75,1197],[93,1177]],
    w: 1, colors: ['#e48c1e','#ec8e18','#e8881a'], filler: [14, 61, 2, 4, ''],
    sites: [
      ['Fas2',122,1163,22,15],['Acc1',179,1168,22,13.4,'#dc7c16'],['Erg10',239,1183,11,5.5],
      ['Sct1',216,1196,11,7],['Lap2',237,1203,7,5],['Pmt1',180,1217,22,11,'#ee8e10'],['Pmt2',226,1224,10,7],['Mnn9',115,1197,13,7],
      ['Ktr7',91,1194,9,5],['Sps14',246,1164,7,3.5],['Dpl1',158,1189,7,4],['Sac1',135,1201,7,3],['Pmt4',147,1207,7,3],
    ],
  },
  {
    poly: [[8,1020],[74,1040],[93,1177],[75,1197],[8,1177]],
    w: 2.5, colors: ['#e0a014','#dc9a18','#e2a21a'], filler: [10, 71, 2, 4, ''],
    sites: [
      ['Hmg1',16,1028,7,5],['Abz1',35,1036,10,6],['Glr1',65,1043,6,5],['Rib3',40,1058,12,8],['Bpl1',65,1059,8,6],
      ['Hem12',16,1044,6,3],['Mvd1',16,1070,6,5],['Pho12',38,1086,18,9],['Aro8',69,1085,13,6.5,'#d89c1a'],['Coq6',32,1130,28,15,'#e4a21a'],
      ['Nma2',70,1117,10,5],['Qns1',76,1144,8,6],['Paa1',48,1174,20,12.6,'#d8981a'],['Erg20',82,1172,10,5],['Idi1',51,1041,4,3],['Hem2',12,1054,4,3],
    ],
  },
  {
    poly: [[8,1177],[186,1235],[8,1384]],
    w: 3, colors: ['#d89040'],
    cells: [
      ['Vma8',20,1186,3,'#d08a40',[8,1177,67.5,1198,37,1189,8,1195]],
      ['Vma2',28,1223,14,'#e8a048',[8,1195,37,1189,67.5,1198,33,1273,8,1272]],
      ['Tfp1',93,1251,26.7,'#ce8840',[67.5,1198,186,1235,81.5,1320.7,74,1318,60,1312,33,1273]],
      ['Ipp1',27,1309,14.8,'#da9848',[8,1272,33,1273,60,1312,46,1334.5,8,1336]],
      ['Cox15',63,1327,5,'#e09c48',[60,1312,74,1318,81.5,1320.7,57,1339.5,46,1334.5]],
      ['Atp1',29,1344.6,8.5,'#da9440',[8,1336,46,1334.5,55,1341,28,1365,8,1348]],
      ['Cor1',16,1366,5.5,'#d08c40',[8,1348,28,1365,8,1384]],
    ],
  },
  {
    poly: [[8,1385],[186,1235],[240,1235],[385,1560],[8,1560]],
    w: 3, colors: ['#cfa25c'],
    cells: [
      ['Ccs1',102,1385,38,'#dca75e',[8,1385,125,1287,190,1340,199,1363.5,183,1407,62,1471,30,1456.5,8,1426]],
      ['Tsa1',133,1503,38,'#cfa45c',[62,1471,183,1407,220,1561,87,1561,71,1539.6]],
      ['Cpr1',267,1467,38,'#caa25a',[199,1363.5,204,1360,248,1342,287,1342,387,1561,220,1561,183,1407]],
      ['Oye2',34,1510,19,'#cc9f5a',[8,1465,30,1456.5,62,1471,71,1539.6,44,1561,8,1561]],
      ['Dys1',16,1448.5,5,'#cfa060',[8,1426,30,1456.5,8,1465]],
      ['Faa2',68,1557,6.5,'#e4b068',[44,1561,71,1539.6,87,1561]],
      ['Yhb1',183,1288,16,'#dca664',[125,1287,186,1235,191,1235.6,230.6,1293,227,1309,190,1340]],
      ['Sod1',228,1258,9,'#c9a368',[191,1235.6,240,1235,257,1277,241,1290.5,230.6,1293]],
    ],
  },
  {
    poly: [[230.6,1293],[241,1290.5],[257,1277],[287,1342],[248,1342],[204,1360],[199,1363.5],[190,1340],[227,1309]],
    w: 0.6, colors: ['#cfa45c','#d4a860','#c9a058'],
    sites: [
      ['Pca1',255.6,1294,8,5],['Fre5',239,1306,9,5],['Lin1',255,1318,7,4.5],['Npr1',210,1344,12,7.5],['Ssn3',237,1332.5,10,5],
      ['Dbp9',267,1329,8,4.5],['Yak1',230.6,1317.7,6,3.5],['Nat1',269,1312,4,3],
    ],
  },
  {
    poly: [[390,622],[1283,622],[1455,914],[1497,1176],[1447,1405],[1304,1560],[385,1560],[240,1235]],
    w: 3, colors: ['#a8602a'],
    cells: [
      ['Eno1',850,730,111,'#a8602a',[617,660,668,622,1007,622,1047,650,1125,748,1147,870,565,810],1],
      ['Eno2',852,980,130,'#a55e28',[565,810,1147,870,1160,950,1122,1072,802,1240,675,1198,590,1055,518,932],1],
      ['Tdh3',403,1085,66,'#b06426',[320,914,412,922,518,932,590,1055,370,1330,275,1317,240,1235],1],
      ['Tdh2',552,1213,40,'#b0622a',[590,1055,675,1198,475,1380,410,1375,370,1330],1],
      ['Adh1',469,753,55,'#b5602e',[390,622,575,622,617,660,565,810,518,932,412,922,336,849]],
      ['Adh3',350,897,14,'#ab5c2c',[336,849,412,922,320,914]],
      ['Acs2',621,632,13,'#a55d2c',[575,622,668,622,617,660]],
      ['Shb17',1039,627,7.5,'#9a5a26',[1007,622,1058,622,1047,650]],
      ['Ald6',1147,664,41,'#965a24',[1058,622,1247,622,1235,652,1200,715,1125,748,1047,650]],
      ['Glk1',1255,630,8,'#9a5828',[1247,622,1283,622,1292,640,1235,652]],
      ['Hxk2',1281,729,28,'#a05a2e',[1235,652,1292,640,1415,853,1342,860,1200,715]],
      ['Gpm1',1218,838,38,'#a55c2a',[1125,748,1200,715,1342,860,1160,950,1147,870]],
      ['Pgk1',1312,1058,89,'#b36825',[1160,950,1342,860,1415,853,1455,914,1497,1176,1492,1193,1457,1228,1250,1262,1222,1218,1122,1072]],
      ['Tdh1',333,1349,17,'#ad5f2a',[275,1317,370,1330,410,1375,305,1373]],
      ['Fba1',658,1414,86,'#ae6026',[675,1198,802,1240,855,1400,783,1560,510,1560,475,1380]],
      ['Pdc1',1025,1270,90,'#a25c28',[802,1240,1122,1072,1222,1218,1222,1312,1250,1295,1020,1483,855,1400]],
      ['Pdc6',1236,1268,7,'#9c5a2e',[1222,1218,1250,1262,1250,1295,1222,1312]],
      ['Pgi1',1375,1302,55,'#ab6628',[1250,1262,1457,1228,1479,1252,1462,1338,1454,1358,1409,1439,1360,1445,1250,1295]],
      ['Pda1',1476,1225,7,'#ab6628',[1457,1228,1492,1193,1479,1252]],
      ['Lys20',1439,1403,6,'#a86228',[1454,1358,1458,1370,1447,1405,1400,1453,1409,1439]],
      ['Pyk1',1200,1480,75,'#b26525',[1020,1483,1250,1295,1360,1445,1357,1502,1304,1560,1005,1560]],
      ['Tpi1',901,1510,49,'#a85c28',[855,1400,1020,1483,1005,1560,783,1560]],
      ['Pgm1',1381,1454,8.5,'#9c6030',[1360,1445,1409,1439,1398,1457,1386,1472,1361,1459]],
      ['YMR099C',1369,1478,4,'#a0621e',[1361,1459,1386,1472,1357,1502]],
    ],
  },
  {
    poly: [[305,1373],[475,1380],[510,1560],[385,1560]],
    w: 1.5, colors: ['#a05a26'],
    sites: [['Pfk2',417,1408,45,38],['Pfk1',459,1499,40,24,'#a85c28'],['Aco2',362,1465,14,8,'#b46022'],['Aco1',336,1426,12,5,'#aa5c26'],['Pyc1',390,1509,22,11],['Idp1',412,1541,14,8],['Kgd1',437,1555,12,8]],
  },
  {
    poly: [[1304,1560],[1447,1405],[1415,1560]],
    w: 3, colors: ['#8c4410'],
    sites: [
      ['Hxt2',1425,1451,16,9,'#8e4814'],['Snq2',1403,1467,7,5.5],['Pdr5',1422,1472,11,7],['Mtm1',1373,1514,24,11],['Pma2',1409,1518,24,8,'#984400'],
      ['Itr1',1357,1554,22,13,'#8a4610'],['Dal5',1400,1558,8,5],['Hxt10',1439,1424,7,4],['Hal1',1325,1555,8,5],
    ],
  },
  {
    poly: [[1455,914],[1523,885],[1550,920],[1497,1176]],
    w: 3, colors: ['#c86a1e','#c4661e'], filler: [8, 81, 2, 4, ''],
    sites: [
      ['Gdb1',1515,896,9,6],['Pmi40',1524,916,16,9.5],['Tpr1',1467,934,8,6],['Gpi1',1491,929,9,7],['Ugp1',1503,963,20,11],
      ['Psa1',1501,1019,36,12,'#c8641f'],['Sec53',1535,938,10,6],['Aad3',1475,920,5,3],
    ],
  },
  {
    poly: [[1283,622],[1345,622],[1523,885],[1455,914]],
    w: 3, colors: ['#c25526'],
    cells: [
      ['Gnd2',1298,630,8,'#c45a30',[1283,622,1316,622,1292,640]],
      ['Gnd1',1347,677,14,'#c95c2f',[1292,640,1316,622,1345,622,1406,708,1350,743]],
      ['Tkl1',1428,802,21,'#c25526',[1350,743,1406,708,1505,859,1470,890,1446,898]],
      ['Tal1',1500,883,8,'#c65a28',[1505,859,1523,885,1477,904,1470,890]],
      ['Zwf1',1462,902,6.5,'#c25526',[1446,898,1470,890,1477,904,1455,914]],
    ],
  },
  {
    poly: [[1550,925],[1560,925],[1560,1379],[1477,1368],[1460,1368]],
    w: 3, colors: ['#e8234f'],
    cells: [
      ['Cof1',1547,1022,8.5,'#d8335a',[1548,925,1560,925,1560,1080,1519,1080]],
      ['Tub1',1530,1097,8.5,'#e0265c',[1519,1080,1546,1083,1545,1105,1514,1119]],
      ['Spc24',1553,1096,5,'#e0265c',[1546,1083,1560,1080,1560,1111,1545,1105]],
      ['Tub2',1541,1128,13,'#d8255a',[1514,1119,1545,1105,1560,1111,1560,1145,1516,1138]],
      ['',0,0,0,'#d02a58',[1514,1119,1516,1138,1507,1138]],
      ['Act1',1521,1277,27,'#e8234f',[1507,1138,1516,1138,1560,1145,1560,1379,1477,1368,1460,1368]],
    ],
  },
  {
    poly: [[1455,1371],[1477,1368],[1560,1379],[1560,1410],[1450,1401]],
    w: 3, colors: ['#a80a28','#b00824'],
    sites: [['Doa4',1502,1389,24,14,'#c6001f'],['Chc1',1540,1390,14,7.5,'#b80822'],['Vps15',1459,1395,7,4.5],['Pex1',1467,1388,6,4],['Pex3',1462,1376,5,4],['Apl3',1556,1401,6,4.5]],
  },
  {
    poly: [[1450,1401],[1560,1410],[1560,1447],[1527,1428],[1509,1442],[1500,1439],[1471,1437],[1443,1446]],
    w: 1, colors: ['#f04450','#e6384c'],
    sites: [
      ['Lcd1',1457,1426,14,6.5,'#d8304c'],['Swe1',1488,1422,20,9,'#e6384c'],['Flo1',1550,1428,15,8,'#fc4a4e'],
      ['Dan4',1538,1412,8,5,'#f44a4c'],['Hpf1',1509,1409,6,4.5],['Spa19',1523,1417,8,4],['Clb2',1516,1429,6,4,'#d03050'],
    ],
  },
  {
    poly: [[1443,1446],[1471,1437],[1500,1439],[1509,1442],[1527,1428],[1560,1447],[1560,1560],[1415,1560]],
    w: 1, colors: ['#e83a48'],
    cells: [
      ['Bmh2',1486,1513,27,'#e83a48',[1443,1446,1471,1437,1500,1439,1509,1442,1560,1526,1542,1560,1415,1560]],
      ['Wtm1',1546,1469,8.5,'#d8383f',[1509,1442,1527,1428,1560,1447,1560,1526]],
      ['Cdc15',1554,1551,4,'#d8383f',[1560,1526,1560,1560,1542,1560]],
    ],
  },
];

const THICK = [
  [[8,620],[1345,620],4.5],
  [[133,8],[45,197],[90,620],3],
  [[8,197],[45,197],3],
  [[390,622],[240,1235],[385,1560],3.5],
  [[1345,620],[1550,922],5],
  [[1470,150],[1345,620],5],
  [[1474,133],[1560,140],4.5],
  [[1550,925],[1415,1560],4.5],
  [[1085,150],[1172,618],3],
  [[979,8],[1085,150],2.5],
  [[1055,8],[1085,150],3],
  [[1440,10],[1476,135],3],
  [[1464,86],[1560,85],3],
  [[1419,11],[1410,18],[1355,78],1.5],
  [[8,1177],[186,1235],[240,1235],3],
  [[8,1384],[186,1235],3],
  [[1492,1405],[1560,1447],1.5],
  [[1218,415],[1394,435],0.65],
  [[518,932],[590,1055],[675,1198],0.65],
];

const toPoints = (flat) => {
  const out = [];
  for (let i = 0; i < flat.length; i += 2) out.push([flat[i], flat[i + 1]]);
  return out;
};
const str = (pts) => pts.map((p) => `${p[0].toFixed(2)},${p[1].toFixed(2)}`).join(' ');

function buildGroup(g, gi) {
  const shapes = [];
  const labels = [];
  if (g.cells) {
    g.cells.forEach((c) => {
      shapes.push({ pts: toPoints(c[5]), fill: c[4], thin: !!c[6] });
      if (c[0]) labels.push({ text: c[0], x: c[1], y: c[2], f: c[3] });
    });
  } else {
    const sites = g.filler ? addFiller(g.poly, g.sites, g.filler[0], g.filler[1], g.filler[2], g.filler[3], g.filler[4]) : g.sites;
    const rand = rng(gi * 97 + 5);
    const polys = powerCells(g.poly, sites);
    sites.forEach((s, i) => {
      const fill = s[5] || g.colors[Math.floor(rand() * g.colors.length)];
      if (polys[i].length > 2) shapes.push({ pts: polys[i], fill, thin: false });
      if (s[0] && s[4]) labels.push({ text: s[0], x: s[1], y: s[2], f: s[4] });
    });
  }
  return { shapes, labels };
}

const BUILT = GROUPS.map(buildGroup);

function Label({ text, x, y, f }) {
  const size = f * 1.04;
  const lines = text.split('|');
  return (
    <text x={x} y={y} fontSize={size} textAnchor="middle" fontWeight={size > 4.5 ? 700 : 400} className="fill-white">
      {lines.map((line, i) => (
        <tspan key={i} x={x} dy={i === 0 ? size * (0.36 - (lines.length - 1) * 0.5) : size}>
          {line}
        </tspan>
      ))}
    </text>
  );
}

export default function App() {
  return (
    <div className="w-[2512px] h-[2512px] bg-black overflow-hidden">
      <svg viewBox="0 0 1568 1568" className="block w-[2512px] h-[2512px] font-['DejaVu_Sans',sans-serif]">
        <rect width="1568" height="1568" fill="#000" />
        {BUILT.map((g, i) => (
          <g key={i}>
            {g.shapes.map((s, j) => (
              <polygon
                key={j}
                points={str(s.pts)}
                fill={s.fill}
                stroke="#000"
                strokeOpacity={s.thin ? 0.45 : 1}
                strokeWidth={s.thin ? 0.4 : 0.65}
                strokeLinejoin="round"
              />
            ))}
          </g>
        ))}
        {GROUPS.map((g, i) => (
          <polygon key={i} points={str(g.poly)} fill="none" stroke="#000" strokeWidth={g.w * 0.6} strokeLinejoin="round" />
        ))}
        {THICK.map((t, i) => (
          <polyline key={i} points={str(t.slice(0, -1))} fill="none" stroke="#000" strokeWidth={t[t.length - 1]} strokeLinejoin="round" />
        ))}
        <g className="[filter:drop-shadow(0.8px_0.8px_0_rgba(30,30,30,0.75))]">
          {BUILT.map((g, i) => (
            <g key={i}>
              {g.labels.map((l, j) => (
                <Label key={j} {...l} />
              ))}
            </g>
          ))}
        </g>
        <rect x="3.75" y="3.75" width="1560.5" height="1560.5" fill="none" stroke="#000" strokeWidth="7.5" />
      </svg>
    </div>
  );
}
